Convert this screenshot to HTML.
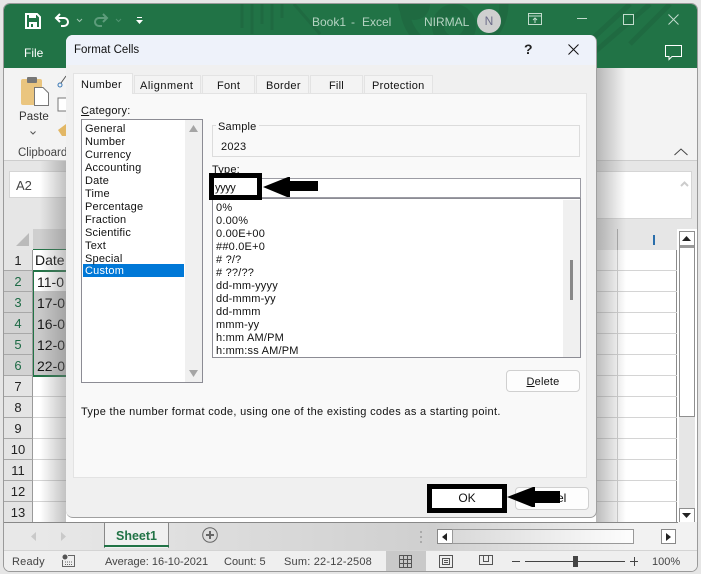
<!DOCTYPE html>
<html><head><meta charset="utf-8"><style>
html,body{margin:0;padding:0;background:#e8e8e8}
#r{position:relative;width:701px;height:574px;overflow:hidden;font-family:"Liberation Sans",sans-serif;font-size:11px;color:#111;background:#e6e6e6}
#r div,#r span.a,#r svg{position:absolute}
.t{white-space:nowrap;line-height:13px}
.d{margin-top:1px;letter-spacing:.2px}
.rn{position:absolute;left:4px;width:28px;height:20px;background:#e4e4e4;border-bottom:1px solid #a8a8a8;border-right:1px solid #9a9a9a;text-align:center;font-size:13px;line-height:22px;color:#222;box-sizing:content-box}
.rs{background:#d2d2d2;color:#1d6a45}
.hl{left:33px;width:644px;height:1px;background:#d4d4d4}
</style></head><body><div id="r">
<!-- window -->
<div style="left:3px;top:3px;width:695px;height:569px;background:#fff;border:1px solid #9a9a9a;border-radius:7px;box-sizing:border-box;overflow:hidden"></div>
<div style="left:4px;top:4px;width:693px;height:64px;background:#217346;border-radius:6px 6px 0 0"></div>
<svg style="left:230px;top:4px" width="467" height="64" fill="none" stroke="#1f6a41" stroke-width="5"><path d="M12 0V24M22 0V30M32 0V20M42 0V26M52 0V14M64 0L90 30" stroke-width="3"/><circle cx="184" cy="0" r="16" fill="#1f6a41" stroke="none"/><circle cx="224" cy="22" r="16" stroke-width="12"/><circle cx="224" cy="0" r="50" stroke-width="9"/><path d="M400 0L348 48M420 0L360 52M440 0L400 40"/></svg>
<!-- QAT -->
<svg style="left:25px;top:13px" width="16" height="16" viewBox="0 0 16 16"><path d="M1 1H12L15 4V15H1Z" fill="none" stroke="#fff" stroke-width="2"/><rect x="4" y="1" width="7" height="4" fill="#fff"/><rect x="4" y="9" width="8" height="6" fill="#fff"/><rect x="6" y="11" width="2" height="3" fill="#217346"/></svg>
<svg style="left:54px;top:13px" width="16" height="15" viewBox="0 0 16 15" fill="none" stroke="#fff" stroke-width="2"><path d="M6 1L2 5L6 9M2 5H10A4 4 0 0 1 10 13H7"/></svg>
<svg style="left:76px;top:18px" width="7" height="5" fill="none" stroke="#9dc4ae"><path d="M1 1L3.5 3.500L6 1"/></svg>
<svg style="left:93px;top:13px" width="16" height="15" viewBox="0 0 16 15" fill="none" stroke="#5d9c7b" stroke-width="2"><path d="M10 1L14 5L10 9M14 5H6A4 4 0 0 0 6 13H9"/></svg>
<svg style="left:115px;top:18px" width="7" height="5" fill="none" stroke="#4f9270"><path d="M1 1L3.5 3.500L6 1"/></svg>
<svg style="left:136px;top:17px" width="7" height="8" fill="#fff"><rect x="1" y="0" width="5" height="1"/><path d="M0 3H7L3.500 7Z"/></svg>
<div class="t" style="left:312px;top:16px;font-size:12px;color:#b5d3c2">Book1</div>
<div class="t" style="left:362px;top:16px;font-size:12px;color:#b5d3c2">Excel</div>
<div class="t" style="left:351px;top:16px;font-size:12px;color:#b5d3c2">-</div>
<div class="t" style="left:424px;top:16px;font-size:12px;color:#b5d3c2">NIRMAL</div>
<div style="left:477px;top:9px;width:24px;height:24px;border-radius:50%;background:#cfcfcf;color:#6d6d8a;font-size:12px;line-height:24px;text-align:center">N</div>
<svg style="left:528px;top:13px" width="15" height="13" fill="none" stroke="#c3dccd"><rect x=".5" y=".5" width="13" height="11"/><path d="M0 3H14M7 10V5M5 7L7 5L9 7"/></svg>
<div style="left:577px;top:18px;width:10px;height:1px;background:#c3dccd"></div>
<div style="left:623px;top:14px;width:9px;height:9px;border:1px solid #c3dccd"></div>
<svg style="left:668px;top:14px" width="11" height="11" stroke="#c3dccd"><path d="M.5 .5L10.500 10.500M10.500 .5L.5 10.500"/></svg>
<div class="t" style="left:24px;top:47px;font-size:12px;color:#fff">File</div>
<svg style="left:665px;top:44px" width="18" height="17" fill="none" stroke="#fff"><path d="M.5 1.500H16.500V12.500H7L4 15.500V12.500H.5Z"/></svg>
<!-- ribbon -->
<div style="left:4px;top:68px;width:693px;height:93px;background:#f3f3f3"></div>
<div style="left:4px;top:160px;width:693px;height:1px;background:#cdcdcd"></div>
<svg style="left:20px;top:75px" width="30" height="32"><rect x="1" y="4" width="21" height="26" rx="2" fill="#eac57f"/><rect x="7" y="2" width="10" height="6" rx="1" fill="#777"/><path d="M14.500 12.500H23L28.500 18V30.500H14.500Z" fill="#fff" stroke="#777"/></svg>
<div class="t" style="left:19px;top:111px;font-size:11.500px;letter-spacing:.1px;color:#333">Paste</div>
<svg style="left:30px;top:131px" width="6" height="4" fill="none" stroke="#555"><path d="M.5 .5L3 3L5.500 .5"/></svg>
<div class="t" style="left:18px;top:147px;font-size:11.500px;color:#444">Clipboard</div>
<svg style="left:57px;top:74px" width="10" height="62"><circle cx="3" cy="11" r="2" fill="none" stroke="#3a78b5"/><path d="M4 9L9 2" stroke="#555"/><rect x="1" y="24" width="9" height="13" fill="#fff" stroke="#777"/><path d="M1 56L9 50V62H5Z" fill="#e2b765"/></svg>
<svg style="left:674px;top:148px" width="14" height="8" fill="none" stroke="#444"><path d="M.5 7L7 1L13.500 7"/></svg>
<!-- formula bar -->
<div style="left:4px;top:161px;width:693px;height:68px;background:#e6e6e6"></div>
<div style="left:9px;top:171px;width:60px;height:27px;background:#fff;border:1px solid #d5d5d5;box-sizing:border-box"></div>
<div class="t" style="left:16px;top:179px;font-size:13px;color:#444">A2</div>
<div style="left:596px;top:171px;width:96px;height:48px;background:#fff;border:1px solid #d5d5d5;box-sizing:border-box"></div>
<svg style="left:680px;top:180px" width="9" height="7" fill="none" stroke="#ccc" stroke-width="2"><path d="M1 6L4.500 2.500L8 6"/></svg>
<!-- header row -->
<div style="left:4px;top:229px;width:673px;height:21px;background:#e6e6e6"></div>
<div style="left:4px;top:229px;width:28px;height:21px;background:#e6e6e6"></div>
<svg style="left:16px;top:233px" width="13" height="13"><path d="M13 0V13H0Z" fill="#bbb"/></svg>
<div style="left:33px;top:229px;width:33px;height:20px;background:#cfcfcf"></div>
<div style="left:33px;top:249px;width:33px;height:2px;background:#217346"></div>
<div style="left:617px;top:229px;width:1px;height:21px;background:#aaa"></div>
<div style="left:653px;top:235px;width:2px;height:10px;background:#2a6eab"></div>
<!-- grid -->
<div style="left:33px;top:250px;width:644px;height:273px;background:#fff"></div>
<div style="left:676px;top:250px;width:1px;height:273px;background:#8a8a8a"></div>
<div class="hl" style="top:270px"></div><div class="hl" style="top:291px"></div><div class="hl" style="top:312px"></div><div class="hl" style="top:333px"></div><div class="hl" style="top:354px"></div><div class="hl" style="top:375px"></div><div class="hl" style="top:396px"></div><div class="hl" style="top:417px"></div><div class="hl" style="top:438px"></div><div class="hl" style="top:459px"></div><div class="hl" style="top:480px"></div><div class="hl" style="top:501px"></div>
<div style="left:617px;top:250px;width:1px;height:273px;background:#d0d0d0"></div>
<div style="left:33px;top:291px;width:33px;height:84px;background:#c9c9c9"></div>
<div style="left:32px;top:270px;width:34px;height:107px;border:2px solid #217346;border-right:0;box-sizing:border-box"></div>
<div class="rn" style="top:250px;line-height:21px">1</div><div class="rn rs" style="top:271px">2</div><div class="rn rs" style="top:292px">3</div><div class="rn rs" style="top:313px">4</div><div class="rn rs" style="top:334px">5</div><div class="rn rs" style="top:355px">6</div><div class="rn" style="top:376px">7</div><div class="rn" style="top:397px">8</div><div class="rn" style="top:418px">9</div><div class="rn" style="top:439px">10</div><div class="rn" style="top:460px">11</div><div class="rn" style="top:481px">12</div><div class="rn" style="top:502px">13</div>
<div class="t" style="left:35px;top:254px;font-size:14px">Date</div>
<div class="t" style="left:37px;top:276px;font-size:14px">11-0</div>
<div class="t" style="left:37px;top:297px;font-size:14px">17-0</div>
<div class="t" style="left:37px;top:318px;font-size:14px">16-0</div>
<div class="t" style="left:37px;top:339px;font-size:14px">12-0</div>
<div class="t" style="left:37px;top:360px;font-size:14px">22-0</div>
<!-- dialog shadows -->
<div style="left:40px;top:161px;width:26px;height:361px;background:linear-gradient(90deg,rgba(120,120,120,0),rgba(120,120,120,.45))"></div>
<div style="left:596px;top:68px;width:30px;height:454px;background:linear-gradient(90deg,rgba(120,120,120,.5),rgba(120,120,120,0))"></div>
<!-- v scroll -->
<div style="left:679px;top:231px;width:16px;height:293px;background:#fff;border:1px solid #8f8f8f;box-sizing:border-box"></div>
<div style="left:680px;top:245px;width:14px;height:3px;background:#9a9a9a"></div>
<svg style="left:682px;top:236px" width="9" height="5"><path d="M0 5L4.500 0L9 5Z" fill="#222"/></svg>
<div style="left:679px;top:416px;width:16px;height:92px;background:#e6e6e6;border-top:1px solid #8f8f8f;box-sizing:border-box"></div>
<div style="left:679px;top:508px;width:16px;height:16px;background:#fff;border:1px solid #8f8f8f;box-sizing:border-box"></div>
<svg style="left:682px;top:513px" width="9" height="5"><path d="M0 0L4.500 5L9 0Z" fill="#222"/></svg>
<!-- tabs bar -->
<div style="left:4px;top:522px;width:693px;height:28px;background:linear-gradient(90deg,#e8e8e8 0,#e8e8e8 5%,#cfcfcf 62%,#f2f2f2 90%)"></div>
<div style="left:4px;top:522px;width:100px;height:1px;background:#888"></div>
<div style="left:168px;top:522px;width:510px;height:1px;background:#888"></div>
<svg style="left:30px;top:532px" width="40" height="9" fill="#c9c9c9"><path d="M6 0V9L1 4.500ZM31 0V9L36 4.500Z"/></svg>
<div style="left:104px;top:522px;width:65px;height:26px;background:#f0f0f0;border:1px solid #888;border-bottom:0;box-sizing:border-box"></div>
<div style="left:104px;top:545px;width:65px;height:2px;background:#217346"></div>
<div class="t" style="left:116px;top:530px;font-size:12.500px;font-weight:bold;color:#217346">Sheet1</div>
<svg style="left:202px;top:527px" width="16" height="16" fill="none" stroke="#666"><circle cx="8" cy="8" r="7.300"/><path d="M4 8H12M8 4V12" stroke-width="2"/></svg>
<div style="left:420px;top:531px;width:2px;height:2px;background:#aaa"></div><div style="left:420px;top:536px;width:2px;height:2px;background:#aaa"></div><div style="left:420px;top:541px;width:2px;height:2px;background:#aaa"></div>
<div style="left:437px;top:529px;width:16px;height:15px;background:#fff;border:1px solid #888;box-sizing:border-box"></div>
<svg style="left:442px;top:533px" width="5" height="8"><path d="M5 0V8L0 4Z" fill="#222"/></svg>
<div style="left:452px;top:529px;width:182px;height:15px;background:linear-gradient(90deg,#d9d9d9,#fdfdfd);border:1px solid #999;box-sizing:border-box"></div>
<div style="left:661px;top:529px;width:15px;height:15px;background:#fff;border:1px solid #888;box-sizing:border-box"></div>
<svg style="left:666px;top:533px" width="5" height="8"><path d="M0 0V8L5 4Z" fill="#222"/></svg>
<!-- status bar -->
<div style="left:4px;top:550px;width:693px;height:21px;background:#efefef;border-top:1px solid #d4d4d4;box-sizing:border-box;border-radius:0 0 6px 6px"></div>
<div class="t" style="left:12px;top:556px;color:#444;letter-spacing:.2px">Ready</div>
<svg style="left:62px;top:554px" width="13" height="13"><circle cx="3" cy="3" r="2.500" fill="#555"/><path d="M6 1.500H12.500V12.500H.5V6" fill="none" stroke="#666"/><path d="M3 8H11M3 10.500H11" stroke="#666" stroke-dasharray="1 1"/></svg>
<div class="t" style="left:105px;top:556px;color:#444">Average: 16-10-2021</div>
<div class="t" style="left:224px;top:556px;color:#444">Count: 5</div>
<div class="t" style="left:284px;top:556px;color:#444;letter-spacing:.2px">Sum: 22-12-2508</div>
<div style="left:386px;top:551px;width:40px;height:20px;background:#c9c9c9"></div>
<svg style="left:399px;top:555px" width="13" height="13" fill="none" stroke="#555"><path d="M.5 .5H12.500V12.500H.5ZM4.500 .5V12.500M8.500 .5V12.500M.5 4.500H12.500M.5 8.500H12.500"/></svg>
<svg style="left:439px;top:555px" width="14" height="13" fill="none" stroke="#555"><rect x=".5" y=".5" width="13" height="12"/><path d="M3.500 3.500H10.500V9.500H3.500ZM5 5.500H9M5 7.500H9"/></svg>
<svg style="left:479px;top:555px" width="14" height="13" fill="none" stroke="#555"><path d="M.5 .5H13.500V9.500H.5ZM4.500 .5V6.500H9.500V.5"/></svg>
<div style="left:512px;top:561px;width:8px;height:1px;background:#444"></div>
<div style="left:525px;top:561px;width:100px;height:1px;background:#444"></div>
<div style="left:573px;top:556px;width:5px;height:11px;background:#444"></div>
<div style="left:630px;top:561px;width:8px;height:1px;background:#444"></div><div style="left:634px;top:557px;width:1px;height:9px;background:#444"></div>
<div class="t" style="left:652px;top:556px;color:#444">100%</div>
<!-- dialog -->
<div style="left:66px;top:35px;width:531px;height:483px;background:#f0f0f0;border:1px solid #a0a0a0;border-top:0;border-left:0;border-radius:7px;box-sizing:border-box;overflow:hidden"></div>
<div style="left:66px;top:35px;width:530px;height:30px;background:#eef2fa;border-radius:7px 7px 0 0"></div>
<div class="t" style="left:74px;top:44px;font-size:11.500px;color:#111">Format Cells</div>
<div class="t" style="left:524px;top:43px;font-size:14px;font-weight:bold;color:#222">?</div>
<svg style="left:568px;top:44px" width="11" height="11" stroke="#111"><path d="M.5 .5L10.500 10.500M10.500 .5L.5 10.500"/></svg>
<!-- tabs -->
<div style="left:73px;top:93px;width:514px;height:385px;background:#f9f9f9;border:1px solid #e3e3e3;box-sizing:border-box"></div>
<div style="left:134px;top:75px;width:67px;height:19px;background:#f3f3f3;border:1px solid #e3e3e3;box-sizing:border-box"></div>
<div style="left:202px;top:75px;width:53px;height:19px;background:#f3f3f3;border:1px solid #e3e3e3;box-sizing:border-box"></div>
<div style="left:256px;top:75px;width:53px;height:19px;background:#f3f3f3;border:1px solid #e3e3e3;box-sizing:border-box"></div>
<div style="left:310px;top:75px;width:53px;height:19px;background:#f3f3f3;border:1px solid #e3e3e3;box-sizing:border-box"></div>
<div style="left:364px;top:75px;width:69px;height:19px;background:#f3f3f3;border:1px solid #e3e3e3;box-sizing:border-box"></div>
<div style="left:73px;top:73px;width:60px;height:21px;background:#f9f9f9;border:1px solid #e3e3e3;border-bottom:0;box-sizing:border-box"></div>
<div class="t d" style="left:81px;top:78px;letter-spacing:.3px">Number</div>
<div class="t d" style="left:140px;top:79px;letter-spacing:.5px">Alignment</div>
<div class="t d" style="left:217px;top:79px;letter-spacing:.3px">Font</div>
<div class="t d" style="left:266px;top:79px;letter-spacing:.3px">Border</div>
<div class="t d" style="left:329px;top:79px">Fill</div>
<div class="t d" style="left:372px;top:79px;letter-spacing:.3px">Protection</div>
<div class="t d" style="left:81px;top:104px"><u>C</u>ategory:</div>
<!-- category -->
<div style="left:81px;top:119px;width:122px;height:264px;background:#fff;border:1px solid #8c8c94;box-sizing:border-box"></div>
<div style="left:185px;top:120px;width:17px;height:262px;background:#f0f0f0"></div>
<svg style="left:189px;top:125px" width="9" height="7"><path d="M0 7L4.500 0L9 7Z" fill="#a5a5a5"/></svg>
<svg style="left:189px;top:370px" width="9" height="7"><path d="M0 0L4.500 7L9 0Z" fill="#a5a5a5"/></svg>
<div style="left:83px;top:264px;width:101px;height:13px;background:#0078d7"></div>
<div class="t d" style="left:85px;top:122px">General</div>
<div class="t d" style="left:85px;top:135px">Number</div>
<div class="t d" style="left:85px;top:148px">Currency</div>
<div class="t d" style="left:85px;top:161px">Accounting</div>
<div class="t d" style="left:85px;top:174px">Date</div>
<div class="t d" style="left:85px;top:187px">Time</div>
<div class="t d" style="left:85px;top:200px">Percentage</div>
<div class="t d" style="left:85px;top:213px">Fraction</div>
<div class="t d" style="left:85px;top:226px">Scientific</div>
<div class="t d" style="left:85px;top:239px">Text</div>
<div class="t d" style="left:85px;top:252px">Special</div>
<div class="t d" style="left:85px;top:264px;color:#fff">Custom</div>
<!-- sample -->
<div style="left:212px;top:125px;width:368px;height:32px;border:1px solid #dcdcdc;box-sizing:border-box"></div>
<div class="t d" style="left:216px;top:120px;background:#f9f9f9;padding:0 2px">Sample</div>
<div class="t d" style="left:221px;top:140px">2023</div>
<div class="t d" style="left:212px;top:163px">Type:</div>
<div style="left:211px;top:178px;width:370px;height:20px;background:#fff;border:1px solid #9c9ca4;box-sizing:border-box"></div>
<!-- type list -->
<div style="left:212px;top:198px;width:369px;height:160px;background:#fff;border:1px solid #8c8c94;box-sizing:border-box"></div>
<div style="left:563px;top:200px;width:17px;height:157px;background:#f0f0f0"></div>
<div style="left:570px;top:260px;width:3px;height:40px;background:#8a8a8a"></div>
<div class="t d" style="left:216px;top:201px">0%</div>
<div class="t d" style="left:216px;top:214px">0.00%</div>
<div class="t d" style="left:216px;top:227px">0.00E+00</div>
<div class="t d" style="left:216px;top:240px">##0.0E+0</div>
<div class="t d" style="left:216px;top:253px"># ?/?</div>
<div class="t d" style="left:216px;top:266px"># ??/??</div>
<div class="t d" style="left:216px;top:279px">dd-mm-yyyy</div>
<div class="t d" style="left:216px;top:292px">dd-mmm-yy</div>
<div class="t d" style="left:216px;top:305px">dd-mmm</div>
<div class="t d" style="left:216px;top:318px">mmm-yy</div>
<div class="t d" style="left:216px;top:331px">h:mm AM/PM</div>
<div class="t d" style="left:216px;top:344px">h:mm:ss AM/PM</div>
<!-- delete -->
<div style="left:506px;top:370px;width:74px;height:22px;background:#fdfdfd;border:1px solid #d0d0d0;border-radius:4px;box-sizing:border-box;text-align:center;line-height:22px;letter-spacing:.2px"><u>D</u>elete</div>
<div class="t d" style="left:81px;top:405px;letter-spacing:.32px">Type the number format code, using one of the existing codes as a starting point.</div>
<!-- buttons -->
<div style="left:515px;top:487px;width:74px;height:23px;background:#fdfdfd;border:1px solid #d0d0d0;border-radius:4px;box-sizing:border-box"></div>
<div class="t" style="left:557px;top:492px;font-size:12px">el</div>
<div style="left:427px;top:484px;width:80px;height:29px;background:#fff;border:5px solid #000;box-sizing:border-box;text-align:center;line-height:19px;font-size:12px;color:#111">OK</div>
<svg style="left:506px;top:486px" width="56" height="22"><path d="M1 11L27 1H29V5H54V17H29V21H26Z" fill="#000"/></svg>
<!-- type highlight -->
<div style="left:209px;top:173px;width:53px;height:27px;background:#fff;border:5px solid #000;box-sizing:border-box"></div>
<div class="t" style="left:215px;top:182px;letter-spacing:-.4px">yyyy</div>
<svg style="left:262px;top:176px" width="57" height="22"><path d="M1 11L26 1H28V5H56V15H28V21H25Z" fill="#000"/></svg>
</div></body></html>
